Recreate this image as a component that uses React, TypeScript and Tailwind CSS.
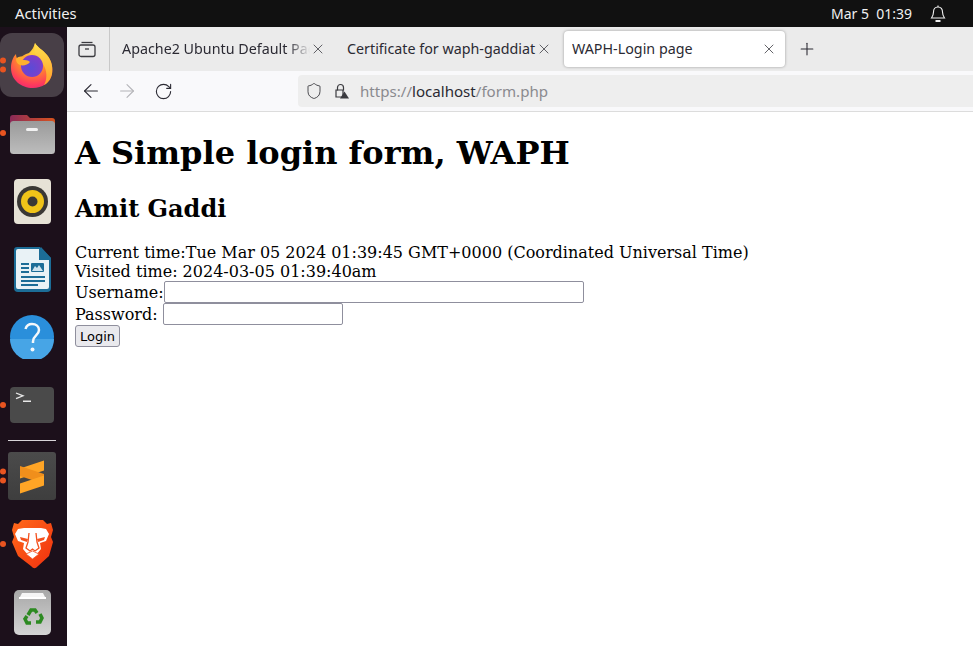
import { ArrowLeft, ArrowRight, RotateCw, Plus, X, Shield } from 'lucide-react';

const uiFont = "font-['Noto_Sans',sans-serif]";

const Firefox = () => (
  <svg width="44" height="46" viewBox="0 0 44 46">
    <defs>
      <radialGradient id="ffBody" cx="0.55" cy="0.2" r="0.95">
        <stop offset="0" stopColor="#ffd43a" />
        <stop offset="0.45" stopColor="#ff8a2a" />
        <stop offset="0.75" stopColor="#ff3d5a" />
        <stop offset="1" stopColor="#e31587" />
      </radialGradient>
      <linearGradient id="ffTop" x1="0.5" y1="0" x2="0.5" y2="1">
        <stop offset="0" stopColor="#ffe14d" />
        <stop offset="1" stopColor="#ff9d2a" />
      </linearGradient>
      <radialGradient id="ffGlobe" cx="0.45" cy="0.6" r="0.7">
        <stop offset="0" stopColor="#5b4bd6" />
        <stop offset="1" stopColor="#8a3bc4" />
      </radialGradient>
    </defs>
    <path d="M25 1c2 4 8 7 12 12 5 6 6 13 5 19-2 9-10 14-19 14C11 46 1 38 1 26c0-6 2-11 5-14 0 3 1 5 3 6 2-4 6-6 10-7 3-3 5-6 6-10z" fill="url(#ffBody)" />
    <path d="M25 1c2 4 8 7 12 12 5 6 6 13 5 19-1 5-4 9-8 11 3-5 3-12 1-17-2-6-7-9-10-14-1-4-1-8 0-11z" fill="url(#ffTop)" />
    <circle cx="22" cy="24" r="11" fill="url(#ffGlobe)" />
    <path d="M6 17c3-3 6-3 8-1l-2 2c3 0 6 0 8 2-2 3-7 4-10 3-3-1-4-4-4-6z" fill="#ffb02e" />
  </svg>
);

const Folder = () => (
  <svg width="45" height="41" viewBox="0 0 45 41">
    <defs>
      <linearGradient id="folderTab" x1="0" y1="0" x2="1" y2="0">
        <stop offset="0" stopColor="#8a2a58" />
        <stop offset="1" stopColor="#d9531e" />
      </linearGradient>
      <linearGradient id="folderBody" x1="0" y1="0" x2="0" y2="1">
        <stop offset="0" stopColor="#9a9a9a" />
        <stop offset="1" stopColor="#bdbdbd" />
      </linearGradient>
    </defs>
    <path d="M0 5a3 3 0 0 1 3-3h14l3 3h22a3 3 0 0 1 3 3v8H0z" fill="url(#folderTab)" />
    <rect x="0" y="8" width="45" height="33" rx="3.5" fill="url(#folderBody)" />
    <rect x="16" y="15" width="12" height="3" rx="1.5" fill="#f2f2f2" />
  </svg>
);

const Rhythmbox = () => (
  <svg width="37" height="45" viewBox="0 0 37 45">
    <rect width="37" height="45" rx="4" fill="#e6e2d6" />
    <circle cx="18.5" cy="22.5" r="15.5" fill="#3a3835" />
    <circle cx="18.5" cy="22.5" r="11.5" fill="#f0c419" />
    <circle cx="18.5" cy="22.5" r="5" fill="#3a3835" />
  </svg>
);

const Writer = () => (
  <svg width="37" height="45" viewBox="0 0 37 45">
    <path d="M3 0h23l11 11v30a4 4 0 0 1-4 4H4a4 4 0 0 1-4-4V3a3 3 0 0 1 3-3z" fill="#1c6d97" />
    <path d="M4 2h21v11h10v27a2 2 0 0 1-2 2H4a2 2 0 0 1-2-2V4a2 2 0 0 1 2-2z" fill="#e9f2f6" />
    <path d="M27 0l10 11h-10z" fill="#1c6d97" />
    <rect x="7" y="16" width="8" height="2" fill="#1c6d97" />
    <rect x="7" y="20" width="8" height="2" fill="#1c6d97" />
    <rect x="7" y="24" width="8" height="2" fill="#1c6d97" />
    <rect x="17" y="16" width="13" height="9" rx="1" fill="#1c6d97" />
    <path d="M18 24l3-5 2 2 2-3 4 6z" fill="#cfe3ee" />
    <rect x="7" y="29" width="24" height="2" fill="#1c6d97" />
    <rect x="7" y="33" width="24" height="2" fill="#1c6d97" />
    <rect x="7" y="37" width="17" height="2" fill="#1c6d97" />
  </svg>
);

const Help = () => (
  <svg width="44" height="44" viewBox="0 0 44 44">
    <circle cx="22" cy="22" r="22" fill="#2a8fdb" />
    <path d="M0 24h44a22 22 0 0 1-44 0z" fill="#47a5e6" />
    <path d="M15.5 14c1-3.5 3.5-5 6.5-5 4 0 7 2.5 7 6 0 5.5-6 5.5-6 11.5v1.5" fill="none" stroke="#f4f8fb" strokeWidth="2.5" />
    <circle cx="22.5" cy="34.5" r="2" fill="#f4f8fb" />
  </svg>
);

const Terminal = () => (
  <svg width="44" height="36" viewBox="0 0 44 36">
    <rect width="44" height="36" rx="4" fill="#4a4a4a" />
    <path d="M6 6l7 2.8-7 2.800" fill="none" stroke="#e8e8e8" strokeWidth="1.3" />
    <rect x="13" y="13.500" width="8" height="1.500" fill="#e8e8e8" />
  </svg>
);

const Sublime = () => (
  <svg width="48" height="48" viewBox="0 0 48 48">
    <defs>
      <linearGradient id="subBg" x1="0" y1="0" x2="0" y2="1">
        <stop offset="0" stopColor="#4b4b4b" />
        <stop offset="1" stopColor="#3e3e3e" />
      </linearGradient>
    </defs>
    <rect width="48" height="48" rx="3" fill="url(#subBg)" />
    <path d="M12 16.5L36 8.5v10l-24 8z" fill="#ffa526" />
    <path d="M12 21.5l24 8v-10l-24-8z" fill="#f08f1c" transform="translate(0 2.5)" />
    <path d="M12 31.5l24-8v10l-24 8z" fill="#ffa526" />
  </svg>
);

const Brave = () => (
  <svg width="41" height="49" viewBox="0 0 41 49">
    <defs>
      <linearGradient id="braveBg" x1="0" y1="0" x2="1" y2="1">
        <stop offset="0" stopColor="#ff6a1a" />
        <stop offset="1" stopColor="#f0300f" />
      </linearGradient>
    </defs>
    <path d="M10 0h21l4 4 4-1 2 7-2 7 2 5-4 14-11 10c-3 3-4 3-7 0L6 36 0 22l2-5-2-7 2-7 4 1z" fill="url(#braveBg)" />
    <path d="M12 8h17l5 1 3 5-3 7-6 2 1 6-5 6-4 1-4-1-5-6 1-6-6-2-3-7 3-5z" fill="#fff" />
    <path d="M8 17l8 2-1 3-6-2zM33 17l-8 2 1 3 6-2z" fill="#f4511e" />
    <path d="M17 13l-1 9-2 6 4 3 2.500-2 2.500 2 4-3-2-6-1-9" fill="none" stroke="#f4511e" strokeWidth="1.300" />
    <path d="M14 34l6.500-3 6.500 3-6.500 5z" fill="#fff" stroke="#f4511e" strokeWidth="0.800" />
  </svg>
);

const Trash = () => (
  <svg width="37" height="45" viewBox="0 0 37 45">
    <defs>
      <linearGradient id="trashBg" x1="0" y1="0" x2="0" y2="1">
        <stop offset="0" stopColor="#a8a8a8" />
        <stop offset="1" stopColor="#d4d4d4" />
      </linearGradient>
    </defs>
    <rect width="37" height="45" rx="5" fill="url(#trashBg)" />
    <path d="M5 9l3-6h21l3 6z" fill="#f5f5f5" />
    <rect x="5" y="7" width="27" height="2" fill="#ffffff" />
    <g fill="none" stroke="#2d8a22" strokeWidth="3.5">
      <path d="M14 25l3-5h4l2 3" />
      <path d="M26 24l2 4-2 4h-4" />
      <path d="M17 33h-4l-2-4 2-3" />
    </g>
  </svg>
);

const dots = (n: number) => (
  <div className="absolute left-0 top-1/2 flex -translate-y-1/2 flex-col gap-[3px]">
    {Array.from({ length: n }).map((_, i) => (
      <span key={i} className="block h-[6px] w-[6px] rounded-full bg-[#e95420]" />
    ))}
  </div>
);

const DockItem = ({ children, running = 0, active = false }: { children: React.ReactNode; running?: number; active?: boolean }) => (
  <div className="relative flex h-[68px] w-full items-center">
    {active && <div className="absolute left-0 top-[2px] h-[64px] w-[64px] rounded-xl bg-[#483f47]" />}
    <div className="relative flex w-[64px] items-center justify-center">{children}</div>
    {running > 0 && dots(running)}
  </div>
);

const Dock = () => (
  <div className="flex w-[67px] shrink-0 flex-col bg-[#1c101b] pt-[4px]">
    <DockItem running={2} active><Firefox /></DockItem>
    <DockItem running={1}><Folder /></DockItem>
    <DockItem><Rhythmbox /></DockItem>
    <DockItem><Writer /></DockItem>
    <DockItem><Help /></DockItem>
    <DockItem running={1}><Terminal /></DockItem>
    <div className="mx-[8px] my-[1px] h-px w-[48px] bg-[#d8d4d8]" />
    <DockItem running={2}><Sublime /></DockItem>
    <DockItem running={1}><Brave /></DockItem>
    <DockItem><Trash /></DockItem>
  </div>
);

const Tab = ({ title, width, selected = false, fade = false }: { title: string; width: string; selected?: boolean; fade?: boolean }) => (
  <div className={`relative flex h-[36px] shrink-0 items-center rounded-[4px] pr-[8px] text-[14.3px] text-[#2b2a33] ${width} ${selected ? 'bg-white pl-[8px] shadow-[0_0_3px_rgba(0,0,0,0.35)]' : 'pl-[9px]'}`}>
    <span className={`min-w-0 flex-1 overflow-hidden whitespace-nowrap ${fade ? '[mask-image:linear-gradient(to_right,black_88%,transparent)]' : ''}`}>{title}</span>
    <X size={16} strokeWidth={1.2} className="shrink-0 text-[#3c3c42]" />
  </div>
);

const TabStrip = () => (
  <div className={`flex h-[44px] items-center bg-[#ebebeb] ${uiFont}`}>
    <div className="flex h-full w-[43px] shrink-0 items-center justify-center border-r border-[#c8c8c8] pr-[2px]">
      <svg width="18" height="18" viewBox="0 0 18 18" fill="none" stroke="#3a3a3f" strokeWidth="1.3">
        <path d="M3.5 2.5h11" />
        <rect x="1" y="5" width="16" height="11.500" rx="2" />
        <path d="M7 9h4" />
      </svg>
    </div>
    <div className="ml-[3px] flex items-center gap-[4px]">
      <Tab title="Apache2 Ubuntu Default Page" width="w-[221px]" fade />
      <Tab title="Certificate for waph-gaddiat" width="w-[222px]" />
      <Tab title="WAPH-Login page" width="w-[221px]" selected />
    </div>
    <Plus size={20} strokeWidth={1.3} className="ml-[12px] text-[#2b2a33]" />
  </div>
);

const UrlLock = () => (
  <svg width="16" height="16" viewBox="0 0 16 16" fill="none">
    <path d="M4.5 7.500V4.500a3 3 0 0 1 6 0v3" stroke="#3a3a3f" strokeWidth="1.2" />
    <path d="M3 7h7v7H3z" stroke="#3a3a3f" strokeWidth="1.2" />
    <path d="M11.500 8.500l4.500 7H7z" fill="#3a3a3f" />
  </svg>
);

const NavButton = ({ children }: { children: React.ReactNode }) => (
  <div className="flex w-[36px] items-center justify-center">{children}</div>
);

const Toolbar = () => (
  <div className={`flex h-[41px] items-center border-b border-[#dcdcdc] bg-[#f9f9fb] ${uiFont}`}>
    <div className="flex w-[231px] shrink-0 items-center pl-[6px]">
      <NavButton><ArrowLeft size={22} strokeWidth={1.2} className="text-[#2b2a33]" /></NavButton>
      <NavButton><ArrowRight size={22} strokeWidth={1.2} className="text-[#b4b4b8]" /></NavButton>
      <NavButton><RotateCw size={19} strokeWidth={1.4} className="text-[#2b2a33]" /></NavButton>
    </div>
    <div className="flex h-[32px] flex-1 items-center rounded-l-[4px] bg-[#eeeeee] pl-[7px]">
      <Shield size={18} strokeWidth={1.2} className="text-[#3a3a3f]" />
      <div className="ml-[10px]"><UrlLock /></div>
      <span className="ml-[11px] text-[15.1px] text-[#8a8a8e]">
        https://<span className="text-[#2b2a33]">localhost</span>/form.php
      </span>
    </div>
  </div>
);

const PageContent = () => (
  <div className="flex-1 bg-white px-[8px] font-['DejaVu_Serif',serif] text-[16px] leading-[19px] text-black">
    <h1 className="mb-[23px] mt-[23px] text-[32px] font-bold leading-[37px]">A Simple login form, WAPH</h1>
    <h2 className="mb-[20px] text-[24px] font-bold leading-[28px]">Amit Gaddi</h2>
    <div>Current time:Tue Mar 05 2024 01:39:45 GMT+0000 (Coordinated Universal Time)</div>
    <div>Visited time: 2024-03-05 01:39:40am</div>
    <form className="flex flex-col">
      <label className="flex h-[22px] items-center">
        Username:<input className="h-[22px] w-[420px] rounded-[2px] border border-[#8f8f9d] bg-white" />
      </label>
      <label className="flex h-[22px] items-center">
        Password:<input type="password" className="ml-[5px] h-[22px] w-[180px] rounded-[2px] border border-[#8f8f9d] bg-white" />
      </label>
      <div className="flex">
        <button type="button" className="h-[22px] w-[45px] rounded-[3px] border border-[#8f8f9d] bg-[#e9e9ed] font-['DejaVu_Sans',sans-serif] text-[13px] leading-none">
          Login
        </button>
      </div>
    </form>
  </div>
);

export default function App() {
  return (
    <div className="flex h-[646px] w-[973px] flex-col overflow-hidden">
      <div className={`flex h-[27px] shrink-0 items-center justify-between bg-[#111111] text-[14px] text-[#f0f0f0] ${uiFont}`}>
        <span className="pl-[15px] text-[14.8px]">Activities</span>
        <div className="flex items-center pr-[27px]">
          <span>Mar 5&nbsp;&nbsp;01:39</span>
          <svg className="ml-[18px]" width="16" height="18" viewBox="0 0 16 18" fill="none" stroke="#f0f0f0" strokeWidth="1.1">
            <path d="M8 0.5v1.5" />
            <path d="M8 2c-3 0-4.5 2-4.500 5 0 3-1 4.500-2 6h13c-1-1.500-2-3-2-6 0-3-1.500-5-4.500-5z" />
            <path d="M5.500 16h5" strokeWidth="2" />
          </svg>
        </div>
      </div>
      <div className="flex min-h-0 flex-1">
        <Dock />
        <div className="flex min-w-0 flex-1 flex-col">
          <TabStrip />
          <Toolbar />
          <PageContent />
        </div>
      </div>
    </div>
  );
}
